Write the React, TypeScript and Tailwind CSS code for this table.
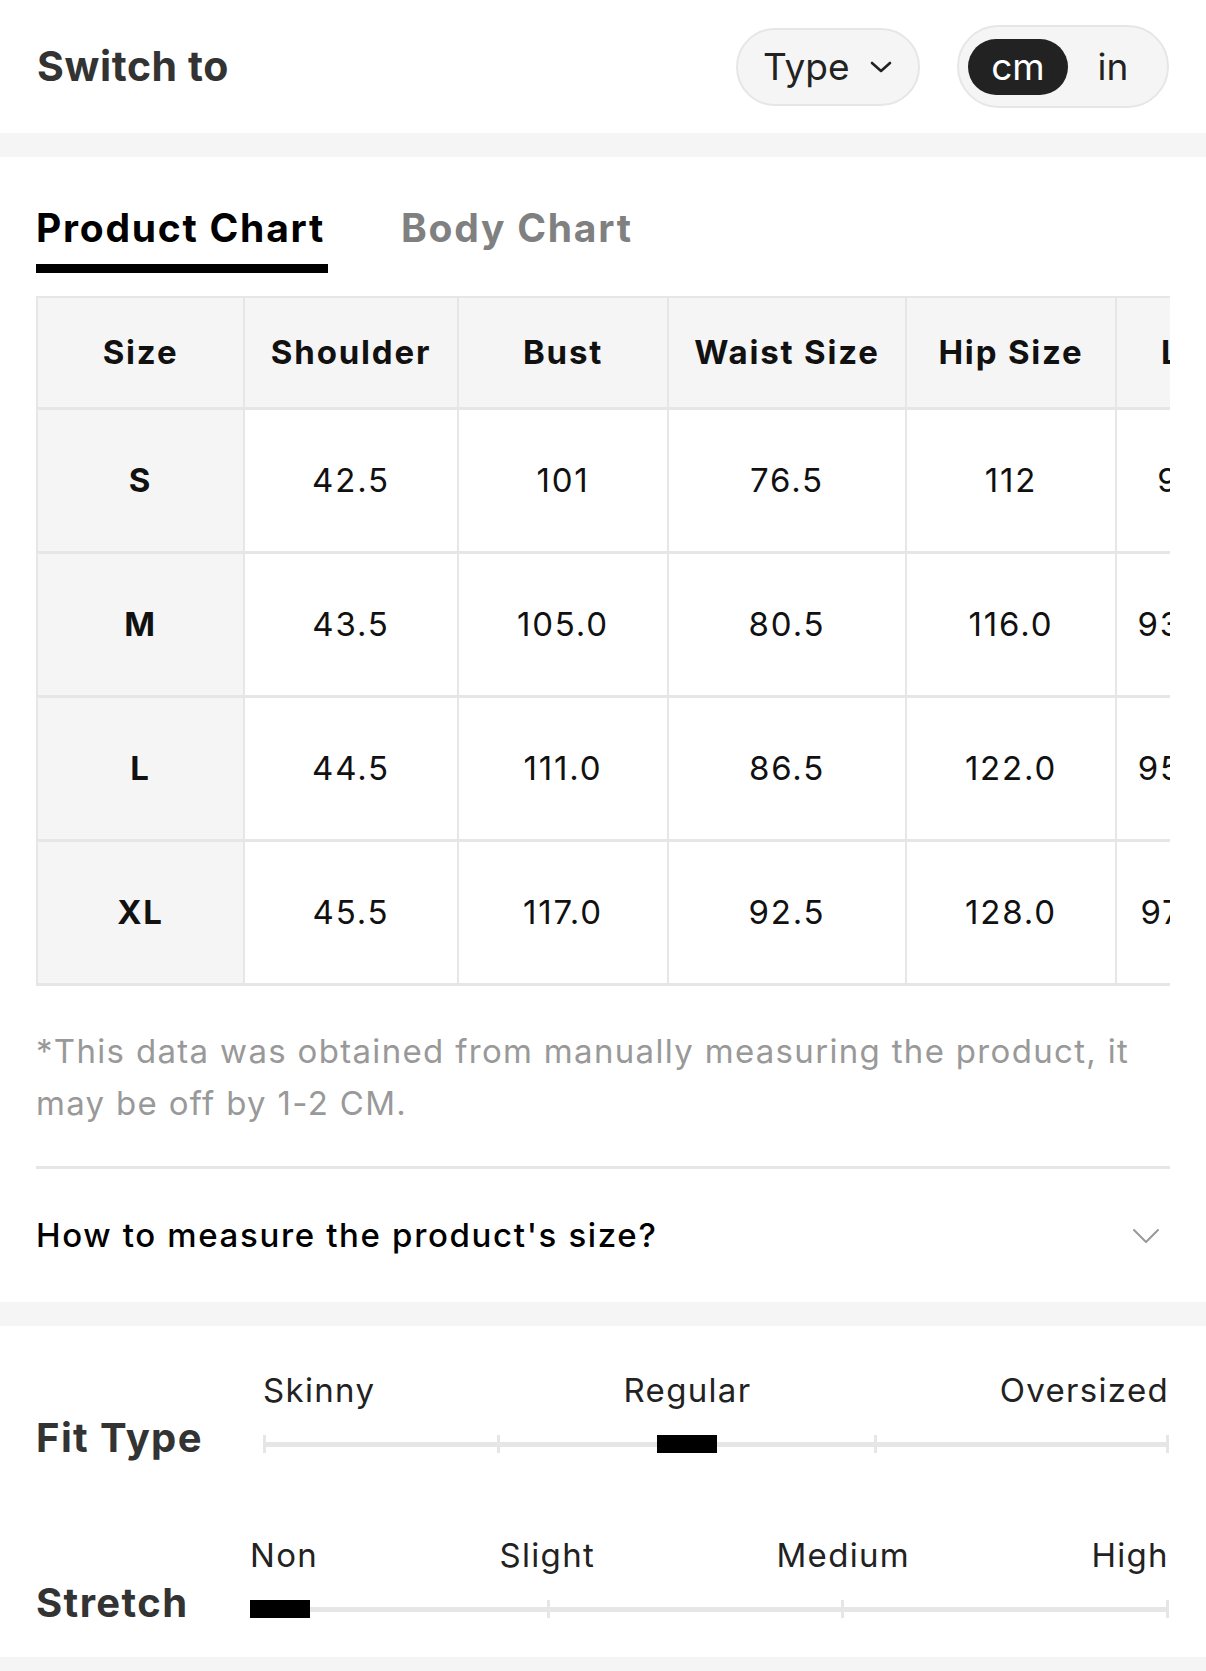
import React from 'react';

type Row = { size: string; values: string[] };

const headers = ['Shoulder', 'Bust', 'Waist Size', 'Hip Size'];
const colWidths = ['w-[214px]', 'w-[210px]', 'w-[238px]', 'w-[210px]'];

const rows: Row[] = [
  { size: 'S', values: ['42.5', '101', '76.5', '112', '91'] },
  { size: 'M', values: ['43.5', '105.0', '80.5', '116.0', '93.0'] },
  { size: 'L', values: ['44.5', '111.0', '86.5', '122.0', '95.0'] },
  { size: 'XL', values: ['45.5', '117.0', '92.5', '128.0', '97.0'] },
];

function ChevronDown({ className }: { className?: string }) {
  return (
    <svg className={className} viewBox="0 0 24 14" fill="none">
      <polyline
        points="3,3 12,11 21,3"
        stroke="currentColor"
        strokeWidth="2.6"
        strokeLinecap="round"
        strokeLinejoin="round"
      />
    </svg>
  );
}

function Slider({
  title,
  titleWidth,
  labels,
  ticks,
  marker,
}: {
  title: string;
  titleWidth: string;
  labels: string[];
  ticks: number[];
  marker: number;
}) {
  return (
    <div className="flex items-start">
      <div
        className={`${titleWidth} mt-[44px] shrink-0 text-[40px] font-bold leading-[48px] tracking-[0.035em] text-[#333]`}
      >
        {title}
      </div>
      <div className="flex-1">
        <div className="flex justify-between text-[33px] leading-[40px] tracking-[0.04em] text-[#222]">
          {labels.map((label) => (
            <span key={label}>{label}</span>
          ))}
        </div>
        <div className="relative mt-[25px] h-[18px]">
          <div className="absolute inset-x-0 top-[7px] h-[5px] bg-[#e6e6e6]" />
          {ticks.map((t) => (
            <div
              key={t}
              className="absolute top-0 h-[18px] w-[3px] bg-[#e6e6e6]"
              style={{ left: `calc(${t}% - ${t * 0.03}px)` }}
            />
          ))}
          <div
            className="absolute top-0 h-[18px] w-[60px] bg-black"
            style={{ left: `${marker}%` }}
          />
        </div>
      </div>
    </div>
  );
}

export default function App() {
  return (
    <div className="min-h-[1671px] bg-white font-['Inter','Noto_Sans',sans-serif] text-[#222]">
      {/* switch row */}
      <div className="flex h-[133px] items-center justify-between pl-[37px] pr-[37px]">
        <div className="text-[41px] font-bold leading-none tracking-[0.015em] text-[#333]">
          Switch to
        </div>
        <div className="flex items-center gap-[37px]">
          <button
            type="button"
            className="flex h-[78px] w-[184px] items-center rounded-full border-2 border-[#e6e6e6] bg-[#f5f5f5] pl-[25px] text-[37px] leading-none text-[#222]"
          >
            <span>Type</span>
            <ChevronDown className="ml-[19px] h-[14px] w-[24px] text-[#222]" />
          </button>
          <div className="flex h-[83px] items-center rounded-full border-2 border-[#e6e6e6] bg-[#f5f5f5] px-[9px]">
            <div className="flex h-[56px] w-[100px] items-center justify-center rounded-full bg-[#222] text-[37px] leading-none text-white">
              cm
            </div>
            <div className="flex h-[56px] w-[90px] items-center justify-center text-[37px] leading-none text-[#222]">
              in
            </div>
          </div>
        </div>
      </div>

      <div className="h-[24px] bg-[#f5f5f5]" />

      {/* chart */}
      <div className="px-[36px]">
        <div className="mt-[47px] flex">
          <div className="w-[292px]">
            <div className="whitespace-nowrap text-[39px] font-bold leading-[48px] tracking-[0.045em] text-black">
              Product Chart
            </div>
            <div className="mt-[12px] h-[9px] bg-black" />
          </div>
          <div className="ml-[73px]">
            <div className="whitespace-nowrap text-[39px] font-bold leading-[48px] tracking-[0.045em] text-[#808080]">
              Body Chart
            </div>
          </div>
        </div>

        <div className="mt-[23px] w-full overflow-hidden">
          <div className="w-[1279px] text-[33px] leading-none tracking-[0.055em] text-[#111]">
            <div className="flex h-[111px] border-t-2 border-[#e6e6e6] bg-[#f5f5f5] font-bold">
              <div className="flex w-[207px] items-center justify-center border-l-2 border-[#e6e6e6]">
                Size
              </div>
              {headers.map((h, i) => (
                <div
                  key={h}
                  className={`${colWidths[i]} flex items-center justify-center whitespace-nowrap border-l-2 border-[#e6e6e6]`}
                >
                  {h}
                </div>
              ))}
              <div className="flex w-[200px] items-center border-l-2 border-[#e6e6e6] pl-[44px]">
                Length
              </div>
            </div>
            {rows.map((row, ri) => (
              <div
                key={row.size}
                className={`flex h-[144px] border-t-[3px] border-[#e6e6e6] ${
                  ri === rows.length - 1 ? 'h-[147px] border-b-[3px]' : ''
                }`}
              >
                <div className="flex w-[207px] items-center justify-center border-l-2 border-[#e6e6e6] bg-[#f5f5f5] font-bold">
                  {row.size}
                </div>
                {row.values.slice(0, 4).map((v, i) => (
                  <div
                    key={i}
                    className={`${colWidths[i]} flex items-center justify-center border-l-2 border-[#e6e6e6]`}
                  >
                    {v}
                  </div>
                ))}
                <div className="flex w-[200px] items-center border-l-2 border-[#e6e6e6]">
                  <span className="w-[118px] text-center">{row.values[4]}</span>
                </div>
              </div>
            ))}
          </div>
        </div>

        <p className="mt-[39px] whitespace-nowrap text-[33px] leading-[52px] tracking-[0.04em] text-[#999]">
          *This data was obtained from manually measuring the product, it
          <br />
          may be off by 1-2 CM.
        </p>

        <div className="mt-[37px] h-[3px] bg-[#e6e6e6]" />

        <div className="flex h-[133px] items-center justify-between">
          <span className="text-[33px] font-medium leading-none tracking-[0.05em] text-black">
            How to measure the product's size?
          </span>
          <svg className="mr-[10px] h-[16px] w-[28px] text-[#999]" viewBox="0 0 28 16" fill="none">
            <polyline
              points="2,2 14,14 26,2"
              stroke="currentColor"
              strokeWidth="2"
              strokeLinecap="round"
              strokeLinejoin="round"
            />
          </svg>
        </div>
      </div>

      <div className="h-[24px] bg-[#f5f5f5]" />

      {/* fit */}
      <div className="flex flex-col gap-[73px] pb-[30px] pl-[36px] pr-[37px] pt-[44px]">
        <Slider
          title="Fit Type"
          titleWidth="w-[227px]"
          labels={['Skinny', 'Regular', 'Oversized']}
          ticks={[0, 25.9, 67.7, 100]}
          marker={43.5}
        />
        <Slider
          title="Stretch"
          titleWidth="w-[214px]"
          labels={['Non', 'Slight', 'Medium', 'High']}
          ticks={[0, 32.4, 64.5, 100]}
          marker={0}
        />
      </div>

      <div className="h-[40px] bg-[#f5f5f5]" />
    </div>
  );
}
